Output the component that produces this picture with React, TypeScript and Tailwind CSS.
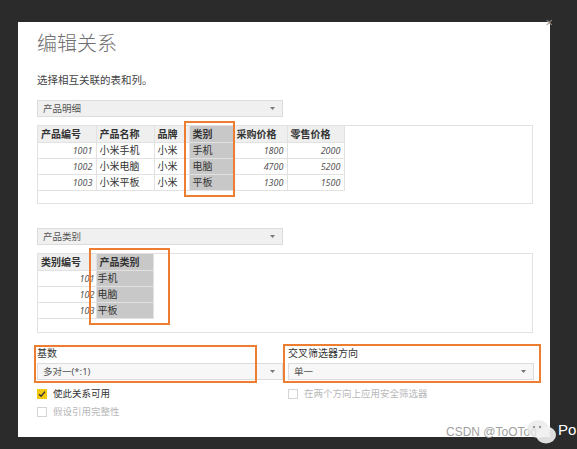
import React from 'react';

const font = { fontFamily: '"Noto Sans", "Noto Sans CJK SC", sans-serif' };

function Select({ label, tone = 'bg-[#f0f0f0]', width = 'w-[246px]' }: { label: string; tone?: string; width?: string }) {
  return (
    <div className={`${width} h-[17px] ${tone} border border-[#dcdcdc] flex items-center justify-between pl-[5px] pr-[7px]`}>
      <span className="text-[9.5px] text-[#555] leading-none">{label}</span>
      <svg width="5" height="3" viewBox="0 0 5 3">
        <path d="M0 0 H5 L2.5 3 Z" fill="#777" />
      </svg>
    </div>
  );
}

function Check({ label, checked, disabled }: { label: string; checked?: boolean; disabled?: boolean }) {
  return (
    <div className="flex items-center h-[14px] gap-[6px]">
      {checked ? (
        <div className="w-[10px] h-[10px] bg-[#f2c811] flex items-center justify-center">
          <svg width="8" height="8" viewBox="0 0 8 8">
            <path d="M1 4.2 L3.1 6.2 L7 1.6" fill="none" stroke="#333" strokeWidth="1.4" />
          </svg>
        </div>
      ) : (
        <div className="w-[10px] h-[10px] border border-[#d4d4d4] bg-white" />
      )}
      <span className={`text-[9.5px] leading-none ${disabled ? 'text-[#b8b8b8]' : 'text-[#333]'}`}>{label}</span>
    </div>
  );
}

const detailCols = [
  { name: '产品编号', w: 'w-[58px]' },
  { name: '产品名称', w: 'w-[58px]' },
  { name: '品牌', w: 'w-[35px]' },
  { name: '类别', w: 'w-[44px]' },
  { name: '采购价格', w: 'w-[54px]' },
  { name: '零售价格', w: 'w-[57px]' },
];

const detailRows = [
  ['1001', '小米手机', '小米', '手机', '1800', '2000'],
  ['1002', '小米电脑', '小米', '电脑', '4700', '5200'],
  ['1003', '小米平板', '小米', '平板', '1300', '1500'],
];

const numeric = [0, 4, 5];

export default function App() {
  return (
    <div className="w-[577px] h-[449px] bg-[#2b2b2b] overflow-hidden relative" style={font}>
      <div className="ml-[18px] mt-[22px] w-[532px] h-[415px] bg-white relative pl-[19px] pt-[10px]">
        <span className="absolute right-[-3px] top-[-6px] text-[13px] text-[#999] leading-none">×</span>

        <h1 className="h-[24px] leading-[24px] text-[20px] text-[#707070] font-light">编辑关系</h1>
        <p className="mt-[16px] h-[16px] leading-[16px] text-[10.5px] text-[#444]">选择相互关联的表和列。</p>

        <div className="mt-[12px]">
          <Select label="产品明细" />
        </div>

        {/* 产品明细 preview */}
        <div className="mt-[8px] w-[496px] h-[79px] border border-[#e2e2e2] relative">
          <table className="border-collapse table-fixed text-[10px] text-[#333]">
            <thead>
              <tr className="h-[16px]">
                {detailCols.map((c, i) => (
                  <th
                    key={c.name}
                    className={`${c.w} p-0 pl-[3px] text-left font-bold leading-none border border-[#e2e2e2] border-t-0 ${i === 0 ? 'border-l-0' : ''} ${i === 3 ? 'bg-[#c8c8c8]' : 'bg-[#efefef]'}`}
                  >
                    {c.name}
                  </th>
                ))}
              </tr>
            </thead>
            <tbody>
              {detailRows.map((r) => (
                <tr key={r[0]} className="h-[16px]">
                  {r.map((v, i) => (
                    <td
                      key={i}
                      className={`p-0 leading-none border border-[#e2e2e2] ${i === 0 ? 'border-l-0' : ''} ${
                        numeric.includes(i) ? 'text-right italic text-[9px] text-[#555] pr-[3px]' : 'pl-[3px]'
                      } ${i === 3 ? 'bg-[#c8c8c8]' : ''}`}
                    >
                      {v}
                    </td>
                  ))}
                </tr>
              ))}
            </tbody>
          </table>
          <div className="absolute left-[146px] top-[-5px] w-[51px] h-[76px] border-2 border-[#ed7d31]" />
        </div>

        <div className="mt-[24px]">
          <Select label="产品类别" />
        </div>

        {/* 产品类别 preview */}
        <div className="mt-[8px] w-[496px] h-[80px] border border-[#e2e2e2] relative">
          <table className="border-collapse table-fixed text-[10px] text-[#333]">
            <thead>
              <tr className="h-[16px]">
                <th className="w-[58px] p-0 pl-[3px] text-left font-bold leading-none bg-[#efefef] border border-[#e2e2e2] border-t-0 border-l-0">类别编号</th>
                <th className="w-[57px] p-0 pl-[3px] text-left font-bold leading-none bg-[#c8c8c8] border border-[#e2e2e2] border-t-0">产品类别</th>
              </tr>
            </thead>
            <tbody>
              {[
                ['101', '手机'],
                ['102', '电脑'],
                ['103', '平板'],
              ].map(([id, name]) => (
                <tr key={id} className="h-[16px]">
                  <td className="p-0 pr-[1px] text-right italic text-[9px] text-[#555] leading-none border border-[#e2e2e2] border-l-0">{id}</td>
                  <td className="p-0 pl-[1px] leading-none bg-[#c8c8c8] border border-[#e2e2e2]">{name}</td>
                </tr>
              ))}
            </tbody>
          </table>
          <div className="absolute left-[51px] top-[-6px] w-[81px] h-[77px] border-2 border-[#ed7d31]" />
        </div>

        {/* cardinality and filter direction */}
        <div className="mt-[13px] flex gap-[5px]">
          <div className="relative w-[246px]">
            <div className="h-[14px] leading-[14px] text-[10px] text-[#333]">基数</div>
            <div className="mt-[3px]">
              <Select label="多对一(*:1)" tone="bg-[#f7f7f7]" />
            </div>
            <div className="mt-[7px]">
              <Check label="使此关系可用" checked />
            </div>
            <div className="mt-[4px]">
              <Check label="假设引用完整性" disabled />
            </div>
            <div className="absolute left-[-3px] top-[-1px] w-[223px] h-[38px] border-2 border-[#ed7d31]" />
          </div>
          <div className="relative w-[246px]">
            <div className="h-[14px] leading-[14px] text-[10px] text-[#333]">交叉筛选器方向</div>
            <div className="mt-[3px]">
              <Select label="单一" tone="bg-[#f7f7f7]" />
            </div>
            <div className="mt-[7px]">
              <Check label="在两个方向上应用安全筛选器" disabled />
            </div>
            <div className="absolute left-[-5px] top-[-2px] w-[258px] h-[39px] border-2 border-[#ed7d31]" />
          </div>
        </div>
      </div>

      {/* watermark */}
      <div className="absolute left-[446px] top-[425px] text-[12px] leading-[14px] text-[#a0a0a0] whitespace-nowrap" style={{ fontFamily: '"Liberation Sans", sans-serif' }}>
        CSDN @ToOToooo
      </div>
      <svg className="absolute left-[525px] top-[418px]" width="34" height="28" viewBox="0 0 34 28">
        <ellipse cx="13" cy="11" rx="11" ry="9" fill="#e8e8e8" opacity="0.8" />
        <ellipse cx="21" cy="17" rx="10" ry="8.5" fill="#f2f2f2" opacity="0.9" />
        <circle cx="9" cy="9" r="1.2" fill="#999" />
        <circle cx="15" cy="9" r="1.2" fill="#999" />
      </svg>
      <div className="absolute left-[558px] top-[421px] text-[15px] leading-[18px] text-white" style={{ fontFamily: '"Liberation Sans", sans-serif' }}>
        Po
      </div>
    </div>
  );
}
